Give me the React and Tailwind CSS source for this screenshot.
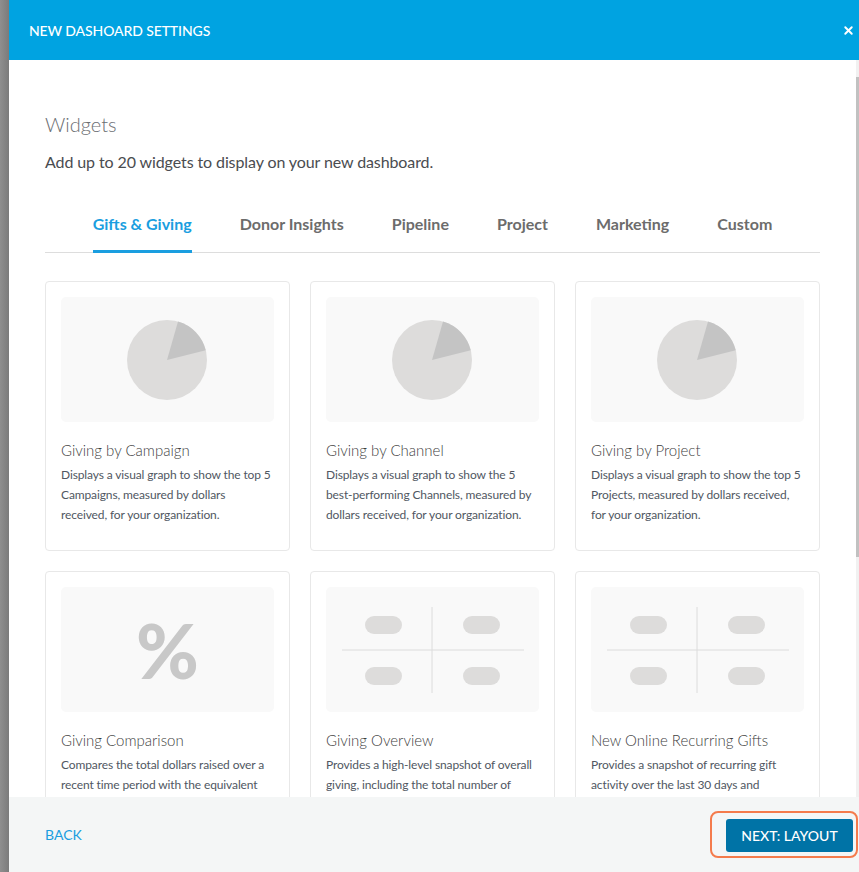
import React from "react";
import { X } from "lucide-react";

const tabs = ["Gifts & Giving", "Donor Insights", "Pipeline", "Project", "Marketing", "Custom"];

const widgets = [
  {
    title: "Giving by Campaign",
    desc: "Displays a visual graph to show the top 5 Campaigns, measured by dollars received, for your organization.",
    art: "pie",
  },
  {
    title: "Giving by Channel",
    desc: "Displays a visual graph to show the 5 best-performing Channels, measured by dollars received, for your organization.",
    art: "pie",
  },
  {
    title: "Giving by Project",
    desc: "Displays a visual graph to show the top 5 Projects, measured by dollars received, for your organization.",
    art: "pie",
  },
  {
    title: "Giving Comparison",
    desc: "Compares the total dollars raised over a recent time period with the equivalent period from the previous year.",
    art: "percent",
  },
  {
    title: "Giving Overview",
    desc: "Provides a high-level snapshot of overall giving, including the total number of donations and the total amount raised.",
    art: "grid",
  },
  {
    title: "New Online Recurring Gifts",
    desc: "Provides a snapshot of recurring gift activity over the last 30 days and comparing it to the previous period.",
    art: "grid",
  },
];

const PieArt = () => (
  <svg width="213" height="125" viewBox="0 0 213 125">
    <circle cx="106" cy="63" r="40" fill="#dddcdb" />
    <path d="M106 63 L117 24.5 A40 40 0 0 1 144.8 53.3 Z" fill="#c4c4c4" />
  </svg>
);

const GridArt = () => (
  <svg width="213" height="125" viewBox="0 0 213 125">
    <line x1="106" y1="20" x2="106" y2="106" stroke="#dcdcdc" strokeWidth="1" />
    <line x1="16" y1="63" x2="198" y2="63" stroke="#dcdcdc" strokeWidth="1" />
    <rect x="39" y="29" width="37" height="18" rx="9" fill="#dddcdb" />
    <rect x="137" y="29" width="37" height="18" rx="9" fill="#dddcdb" />
    <rect x="39" y="80" width="37" height="18" rx="9" fill="#dddcdb" />
    <rect x="137" y="80" width="37" height="18" rx="9" fill="#dddcdb" />
  </svg>
);

const PercentArt = () => (
  <span className="text-[76px] font-black leading-none text-[#c8c8c8]">%</span>
);

const WidgetCard = ({ title, desc, art }) => (
  <div className="rounded-[4px] border border-[#e8e8e8] bg-white p-[15px] pb-[25px]">
    <div className="flex h-[125px] items-center justify-center rounded-[5px] bg-[#f9f9f9]">
      {art === "pie" && <PieArt />}
      {art === "grid" && <GridArt />}
      {art === "percent" && <PercentArt />}
    </div>
    <h3 className="mt-[18px] text-[15px] font-light leading-[20px] text-[#3f3f3f]">{title}</h3>
    <p className="mt-[5px] text-[12px] leading-[20px] tracking-[-0.12px] text-[#505762]">{desc}</p>
  </div>
);

const App = () => {
  return (
    <div className="flex h-[872px] w-full overflow-hidden font-['Lato',sans-serif]">
      <div className="w-[9px] bg-gradient-to-r from-[#8f8f8f] to-[#7b7b7b]"></div>
      <div className="flex flex-1 flex-col">
        <div className="flex h-[60px] items-center justify-between bg-[#00a3e1] pl-[20px] pr-[4px]">
          <span className="text-[14px] font-medium tracking-[-0.1px] text-white">NEW DASHOARD SETTINGS</span>
          <X size={13} strokeWidth={3.5} className="text-white" />
        </div>
        <div className="flex flex-1 overflow-hidden bg-white">
          <div className="flex-1 overflow-hidden pl-[36px] pr-[36px] pt-[50px]">
            <h2 className="text-[20px] font-light leading-[28px] text-[#6b6e72]">Widgets</h2>
            <p className="mt-[12px] text-[16px] leading-[24px] tracking-[-0.1px] text-[#4a4c50]">
              Add up to 20 widgets to display on your new dashboard.
            </p>
            <div className="mt-[38px] flex justify-center gap-[48px] border-b border-[#dddddd]">
              {tabs.map((t, i) => (
                <div
                  key={t}
                  className={
                    i === 0
                      ? "-mb-px border-b-[3px] border-[#1a9ee0] pb-[13px] text-[16px] font-bold leading-[24px] text-[#1a9ee0]"
                      : "pb-[16px] text-[16px] font-bold leading-[24px] text-[#6c6c6c]"
                  }
                >
                  {t}
                </div>
              ))}
            </div>
            <div className="mt-[28px] grid grid-cols-3 gap-[20px]">
              {widgets.map((w) => (
                <WidgetCard key={w.title} {...w} />
              ))}
            </div>
          </div>
          <div className="flex w-[3px] flex-col bg-[#f1f1f1] pt-[17px]">
            <div className="h-[480px] bg-[#c1c1c1]"></div>
          </div>
        </div>
        <div className="flex h-[75px] items-center justify-between bg-[#f4f6f6] pl-[36px] pr-[1px]">
          <span className="text-[14px] uppercase text-[#1a9ee0]">Back</span>
          <div className="mt-[-1px] rounded-[8px] border-2 border-[#f47b4c] pb-[4px] pl-[14px] pr-[3px] pt-[6px]">
            <button className="h-[33px] w-[127px] rounded-[3px] bg-[#0073a6] text-[14px] font-medium text-white">
              NEXT: LAYOUT
            </button>
          </div>
        </div>
      </div>
    </div>
  );
};

export default App;
